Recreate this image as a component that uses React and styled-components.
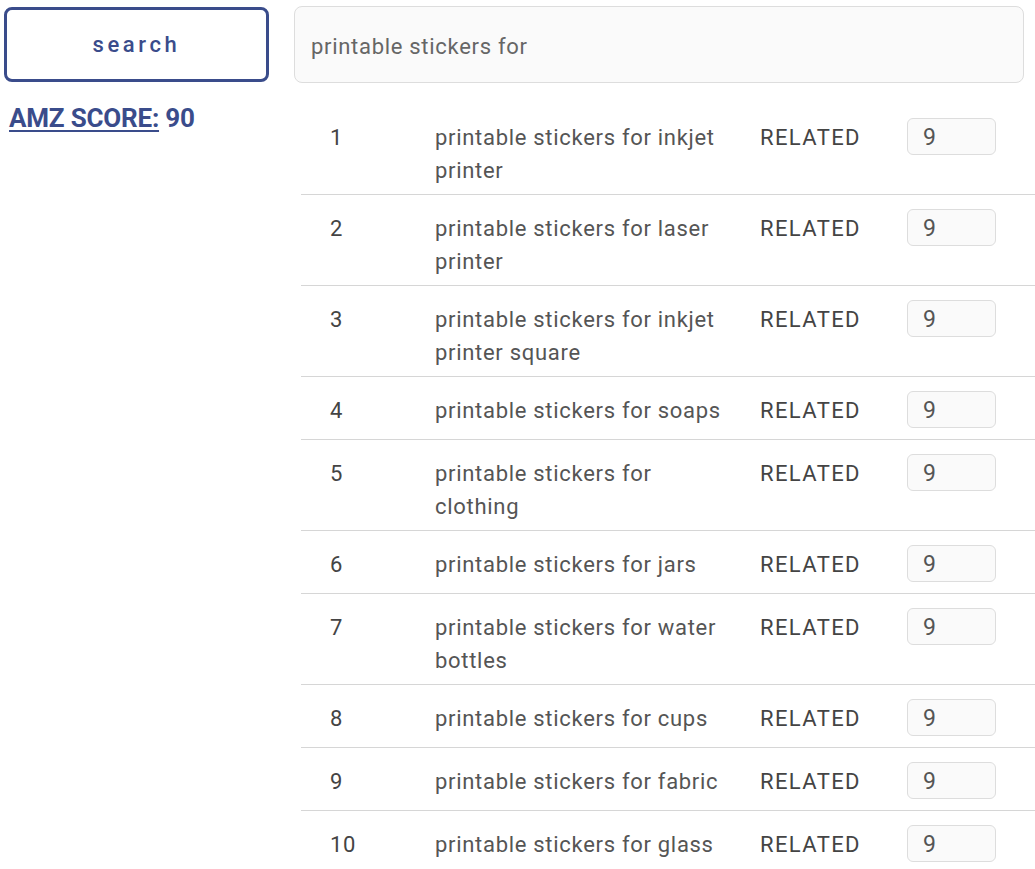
import React from "react";
import styled, { createGlobalStyle } from "styled-components";

const GlobalStyle = createGlobalStyle`
  html, body {
    margin: 0;
    padding: 0;
    background: #ffffff;
    overflow-x: hidden;
  }
  body {
    font-family: Roboto, "Liberation Sans", Arial, sans-serif;
  }
`;

const Page = styled.div`
  display: flex;
  align-items: flex-start;
  gap: 25px;
  padding: 6px 11px 0 4px;
`;

const Side = styled.div`
  width: 265px;
  flex-shrink: 0;
  display: flex;
  flex-direction: column;
`;

const SearchButton = styled.button`
  box-sizing: border-box;
  margin-top: 1px;
  height: 75px;
  width: 100%;
  background: #ffffff;
  border: 3px solid #3a4c8b;
  border-radius: 8px;
  color: #3a4c8b;
  font-family: Roboto, "Liberation Sans", sans-serif;
  font-size: 22px;
  font-weight: 500;
  letter-spacing: 3.6px;
  cursor: pointer;
`;

const Score = styled.div`
  margin-top: 21px;
  padding-left: 5px;
  font-size: 26px;
  font-weight: 700;
  color: #3a4c8b;
  letter-spacing: -0.2px;
  a {
    color: inherit;
    text-decoration: underline;
    text-decoration-thickness: 2px;
    text-underline-offset: 3px;
  }
`;

const Main = styled.div`
  flex: 1;
  min-width: 0;
`;

const QueryBox = styled.div`
  box-sizing: border-box;
  height: 77px;
  background: #fafafa;
  border: 1px solid #dddddd;
  border-radius: 8px;
  padding: 3px 0 0 16px;
  display: flex;
  align-items: center;
  font-size: 22px;
  color: #666666;
  letter-spacing: 0.7px;
`;

const Table = styled.div`
  margin: 21px -20px 0 7px;
`;

const Row = styled.div`
  display: grid;
  grid-template-columns: 105px 325px 147px 1fr;
  align-items: start;
  border-bottom: ${(p) => (p.$last ? "none" : "1px solid #d6d6d6")};
`;

const Cell = styled.div`
  padding: 17px 4px 7px 29px;
  font-size: 22px;
  line-height: 33px;
  color: ${(p) => p.$color || "#4a4a4a"};
  letter-spacing: ${(p) => p.$spacing || "0.7px"};
`;

const InputCell = styled.div`
  padding: 14px 12px 11px 29px;
`;

const ScoreInput = styled.input`
  box-sizing: border-box;
  display: block;
  width: 89px;
  height: 37px;
  padding: 2px 0 0 15px;
  background: #fafafa;
  border: 1px solid #dddddd;
  border-radius: 6px;
  font-family: Roboto, "Liberation Sans", sans-serif;
  font-size: 23px;
  color: #555555;
  outline: none;
`;

const keywords = [
  "printable stickers for inkjet printer",
  "printable stickers for laser printer",
  "printable stickers for inkjet printer square",
  "printable stickers for soaps",
  "printable stickers for clothing",
  "printable stickers for jars",
  "printable stickers for water bottles",
  "printable stickers for cups",
  "printable stickers for fabric",
  "printable stickers for glass",
];

export default function App() {
  return (
    <>
      <GlobalStyle />
      <Page>
        <Side>
          <SearchButton>search</SearchButton>
          <Score>
            <a>AMZ SCORE:</a> 90
          </Score>
        </Side>
        <Main>
          <QueryBox>printable stickers for</QueryBox>
          <Table>
            {keywords.map((kw, i) => (
              <Row key={i} $last={i === keywords.length - 1}>
                <Cell $color="#444444">{i + 1}</Cell>
                <Cell $color="#555555">{kw}</Cell>
                <Cell $color="#444444" $spacing="1.4px">RELATED</Cell>
                <InputCell>
                  <ScoreInput readOnly value="9" />
                </InputCell>
              </Row>
            ))}
          </Table>
        </Main>
      </Page>
    </>
  );
}
